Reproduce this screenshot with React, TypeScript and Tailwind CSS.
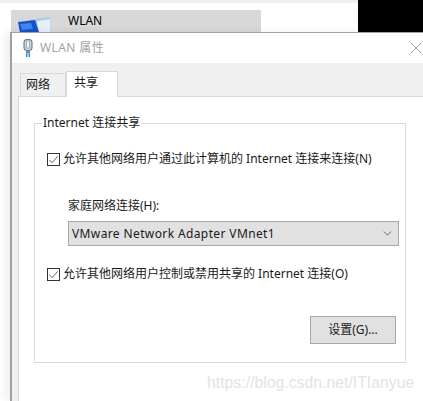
import { ChevronDown } from "lucide-react";

const font = { fontFamily: '"Noto Sans", "Noto Sans CJK SC", sans-serif' };

function Check() {
  return (
    <span className="flex h-[13px] w-[13px] shrink-0 items-center justify-center border border-[#333] bg-white">
      <svg viewBox="0 0 12 12" className="h-[11px] w-[11px]" fill="none" stroke="#555" strokeWidth="1">
        <path d="M1.5 6.5 L4.5 9.5 L10.5 2.5" />
      </svg>
    </span>
  );
}

function AdapterIcon() {
  return (
    <svg viewBox="0 0 10 18" className="h-[18px] w-[10px]">
      <rect x="1" y="0.5" width="8" height="11" rx="2.5" fill="#c9d3dc" stroke="#5f6d7a" />
      <rect x="3.5" y="2" width="3" height="7" fill="#f4f6f8" stroke="#7d8a96" strokeWidth="0.6" />
      <rect x="3" y="11.5" width="4" height="3" fill="#6d8fb0" />
      <rect x="3" y="14.5" width="1.4" height="3.5" fill="#1f86d6" />
      <rect x="5.6" y="14.5" width="1.4" height="3.5" fill="#1f86d6" />
    </svg>
  );
}

function FolderIcon() {
  return (
    <svg viewBox="0 0 36 22" className="h-[22px] w-[36px]">
      <path d="M12 4 L33 1 L35 22 L14 22 Z" fill="#a9c7e6" />
      <path d="M20 5 L33 3 L34 22 L22 22 Z" fill="#e4eff9" />
      <path d="M1 6 L18 4 L24 22 L4 22 Z" fill="#1450c8" />
      <path d="M3 8 L14 7 L16 13 L5 14 Z" fill="#3f86ea" />
    </svg>
  );
}

export default function App() {
  return (
    <div className="relative h-[401px] w-[423px] overflow-hidden bg-white text-[12px] text-[#1a1a1a]" style={font}>
      <div className="h-[3px] bg-[#f0f0f2]" />
      <div className="ml-[11px] mt-[7px] flex h-[22px] w-[250px] items-start bg-[#d8d8d8]">
        <span className="ml-[6px] mt-[6px]">
          <FolderIcon />
        </span>
        <span className="ml-[15px] mt-[3px] text-[12px] leading-[16px] text-black">WLAN</span>
      </div>
      <div className="absolute right-0 top-0 h-[33px] w-[65px] bg-black" />

      <div className="absolute left-[10px] top-[32px] h-[369px] w-[413px] border-l-2 border-t border-[#a0a0a0] bg-[#f0f0f0] shadow-[-6px_0_8px_rgba(0,0,0,0.06)]">
        <div className="flex h-[30px] items-center bg-white pl-[11px]">
          <AdapterIcon />
          <span className="ml-[7px] text-[12px] tracking-[0.4px] text-[#a3a3a3]">WLAN 属性</span>
          <svg viewBox="0 0 12 12" className="ml-auto mr-[1px] h-[12px] w-[12px]" fill="none" stroke="#8a8a8a" strokeWidth="0.9">
            <path d="M1 1 L11 11 M11 1 L1 11" />
          </svg>
        </div>

        <div className="flex h-[33px] items-end pl-[8px]">
          <div className="flex h-[23px] w-[46px] items-center border border-b-0 border-[#d9d9d9] bg-[#f0f0f0] pl-[5px]">网络</div>
          <div className="relative z-10 -mb-px flex h-[26px] w-[52px] items-start border border-b-0 border-[#d9d9d9] bg-white pl-[7px] pt-[2px]">共享</div>
        </div>

        <div className="ml-[6px] h-full border-l border-t border-[#d9d9d9] bg-white pl-[15px] pt-[26px]">
          <div className="relative h-[240px] w-[372px] border border-[#d9d9d9] pl-[12px] pt-[26px]">
            <span className="absolute -top-[9px] left-[7px] bg-white px-[1px] leading-[16px]">Internet 连接共享</span>
            <div className="flex items-center gap-[3px]">
              <Check />
              <span>允许其他网络用户通过此计算机的 Internet 连接来连接(N)</span>
            </div>
            <div className="ml-[21px] mt-[29px] leading-[18px]">家庭网络连接(H):</div>
            <div className="ml-[21px] mt-[6px] flex h-[25px] w-[331px] items-center justify-between border border-[#a8a8a8] bg-[#e1e1e1] pl-[3px] pr-[4px]">
              <span className="tracking-[0.38px]">VMware Network Adapter VMnet1</span>
              <ChevronDown size={13} strokeWidth={1.3} className="text-[#333]" />
            </div>
            <div className="mt-[19px] flex items-center gap-[3px]">
              <Check />
              <span>允许其他网络用户控制或禁用共享的 Internet 连接(O)</span>
            </div>
            <div className="ml-[263px] mt-[33px] flex h-[28px] w-[86px] items-center justify-center border border-[#a8a8a8] bg-[#e1e1e1]">设置(G)...</div>
          </div>
        </div>
      </div>

      <div
        className="absolute left-[207px] top-[373px] text-[15.8px] leading-[20px] text-[#e3e3e3]"
        style={{ fontFamily: '"Liberation Sans", sans-serif' }}
      >
        https://blog.csdn.net/ITIanyue
      </div>
    </div>
  );
}
